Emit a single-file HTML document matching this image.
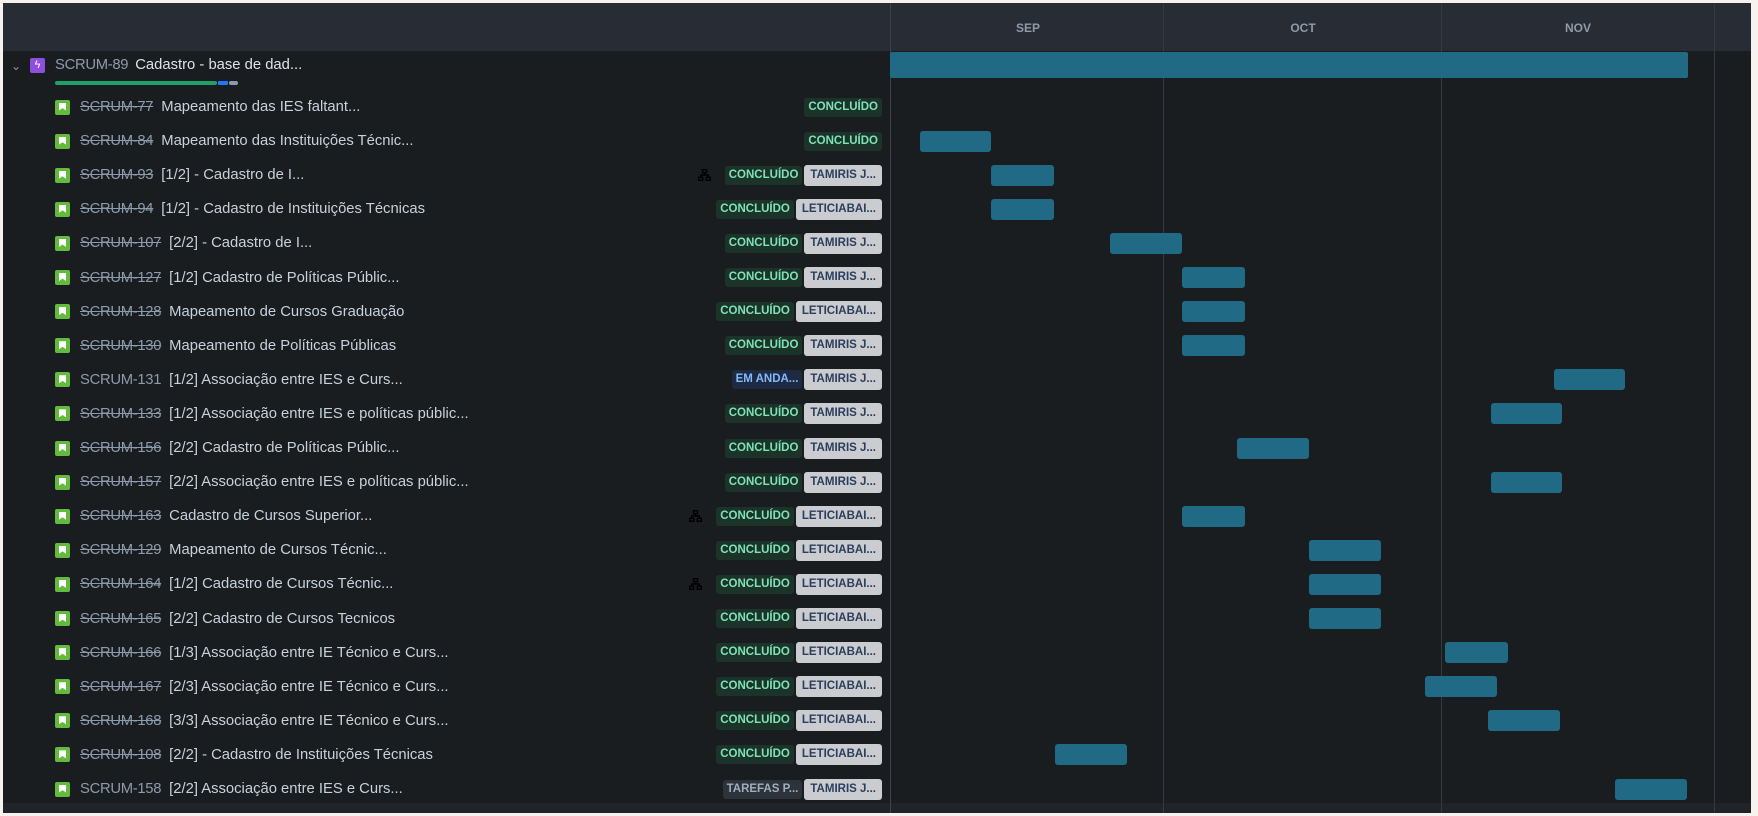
<!DOCTYPE html><html><head><meta charset="utf-8"><style>
*{margin:0;padding:0;box-sizing:border-box}
body{width:1758px;height:816px;background:#f8f2ef;position:relative;overflow:hidden;font-family:"Liberation Sans",Arial,sans-serif}
#f{position:absolute;left:3px;top:3px;width:1748px;height:810px;background:#1a1d20;overflow:hidden}
.hd{position:absolute;left:0;top:0;width:1748px;height:48px;background:#282c34}
.ft{position:absolute;left:0;top:800px;width:1748px;height:10px;background:#202428}
.vl{position:absolute;top:0;width:1px;height:810px;background:#343a42}
.m{position:absolute;top:18px;font-size:12px;font-weight:bold;color:#8f9aa7;width:100px;text-align:center}
.bar{position:absolute;height:21px;background:#216a85;border-radius:3px}
.row{position:absolute;left:52px;height:20px;display:flex;align-items:center;white-space:nowrap;font-size:14.8px}
.ic{width:15px;height:15px;background:#63ba3c;border-radius:2px;margin-right:10px;position:relative}
.ic:after{content:"";position:absolute;left:4px;top:3px;width:7px;height:8px;background:#fff;clip-path:polygon(0 0,100% 0,100% 100%,50% 70%,0 100%)}
.k{color:#8c9bab;margin-right:8px;letter-spacing:-0.3px}
.k.s{text-decoration:line-through}
.t{color:#c7d1db}
.lz{position:absolute;right:3px;display:flex;gap:2px;align-items:center;height:20px}
.l{font-size:11.5px;font-weight:bold;height:19px;line-height:19px;padding:0 4px;border-radius:3px;text-transform:uppercase}
.g{background:#1c3329;color:#7ee2b8}
.b{background:#1c2b41;color:#85b8ff}
.n{background:#2c333a;color:#9fadbc}
.a{background:#cacccf;color:#2c3e5d;height:21px;line-height:21px;border-radius:3px;padding:0 6px}
.hi{width:13px;height:12px;margin-right:12px}
</style></head><body><div id="f">
<div class="hd"></div>
<div class="ft"></div>
<div class="vl" style="left:887px;background:#3c434c"></div>
<div class="vl" style="left:1160px"></div>
<div class="vl" style="left:1438px"></div>
<div class="vl" style="left:1711px"></div>
<div class="m" style="left:975px">SEP</div>
<div class="m" style="left:1250px">OCT</div>
<div class="m" style="left:1525px">NOV</div>
<div class="bar" style="left:887px;top:49px;width:798px;height:26px;border-radius:2px"></div>
<div style="position:absolute;left:8px;top:56px;color:#8c9bab;font-size:12px">&#8964;</div>
<div style="position:absolute;left:27px;top:55px;width:15px;height:15px;background:#8f4ee0;border-radius:2px;color:#fff;font-size:11px;text-align:center;line-height:15px">ϟ</div>
<div style="position:absolute;left:52px;top:54px;font-size:14.8px;white-space:nowrap"><span style="color:#8c9bab;margin-right:7px;letter-spacing:-0.3px">SCRUM-89</span><span style="color:#dfe3e8">Cadastro - base de dad...</span></div>
<div style="position:absolute;left:52px;top:78px;width:162px;height:4px;background:#22a06b;border-radius:2px"></div>
<div style="position:absolute;left:215px;top:78px;width:10px;height:4px;background:#1d7afc;border-radius:1px"></div>
<div style="position:absolute;left:226px;top:78px;width:9px;height:4px;background:#8c9bab;border-radius:2px"></div>
<div id="rows"></div>
</div>
<script>
var R=[
["SCRUM-77","Mapeamento das IES faltant...",1,"g",null,0,null],
["SCRUM-84","Mapeamento das Instituições Técnic...",1,"g",null,0,[921,992]],
["SCRUM-93","[1/2] - Cadastro de I...",1,"g","T",1,[992,1055]],
["SCRUM-94","[1/2] - Cadastro de Instituições Técnicas",1,"g","L",0,[992,1055]],
["SCRUM-107","[2/2] - Cadastro de I...",1,"g","T",0,[1111,1183]],
["SCRUM-127","[1/2] Cadastro de Políticas Públic...",1,"g","T",0,[1183,1246]],
["SCRUM-128","Mapeamento de Cursos Graduação",1,"g","L",0,[1183,1246]],
["SCRUM-130","Mapeamento de Políticas Públicas",1,"g","T",0,[1183,1246]],
["SCRUM-131","[1/2] Associação entre IES e Curs...",0,"b","T",0,[1555,1626]],
["SCRUM-133","[1/2] Associação entre IES e políticas públic...",1,"g","T",0,[1492,1563]],
["SCRUM-156","[2/2] Cadastro de Políticas Públic...",1,"g","T",0,[1238,1310]],
["SCRUM-157","[2/2] Associação entre IES e políticas públic...",1,"g","T",0,[1492,1563]],
["SCRUM-163","Cadastro de Cursos Superior...",1,"g","L",1,[1183,1246]],
["SCRUM-129","Mapeamento de Cursos Técnic...",1,"g","L",0,[1310,1382]],
["SCRUM-164","[1/2] Cadastro de Cursos Técnic...",1,"g","L",1,[1310,1382]],
["SCRUM-165","[2/2] Cadastro de Cursos Tecnicos",1,"g","L",0,[1310,1382]],
["SCRUM-166","[1/3] Associação entre IE Técnico e Curs...",1,"g","L",0,[1446,1509]],
["SCRUM-167","[2/3] Associação entre IE Técnico e Curs...",1,"g","L",0,[1426,1498]],
["SCRUM-168","[3/3] Associação entre IE Técnico e Curs...",1,"g","L",0,[1489,1561]],
["SCRUM-108","[2/2] - Cadastro de Instituições Técnicas",1,"g","L",0,[1056,1128]],
["SCRUM-158","[2/2] Associação entre IES e Curs...",0,"n","T",0,[1616,1688]]];
var h="";
R.forEach(function(r,i){
var c=107+i*34.1-3;
var lab={g:"CONCLUÍDO",b:"EM ANDA...",n:"TAREFAS P..."}[r[3]];
var hi=r[5]?'<svg class="hi" viewBox="0 0 13 12"><g fill="none" stroke="#000" stroke-width="1.4"><rect x="4.5" y="0.7" width="4" height="3"/><rect x="0.7" y="8.3" width="4" height="3"/><rect x="8.3" y="8.3" width="4" height="3"/><path d="M6.5 3.7V6M2.7 8.3V6H10.3V8.3"/></g></svg>':'';
var a=r[4]?'<span class="a l">'+(r[4]=="T"?"TAMIRIS J...":"LETICIABAI...")+'</span>':'';
h+='<div class="row" style="top:'+(c-10)+'px;width:830px"><div class="ic"></div><span class="k'+(r[2]?' s':'')+'">'+r[0]+'</span><span class="t">'+r[1]+'</span><div class="lz">'+hi+'<span class="l '+r[3]+'">'+lab+'</span>'+a+'</div></div>';
if(r[6])h+='<div class="bar" style="left:'+(r[6][0]-4)+'px;top:'+(c-10.5)+'px;width:'+(r[6][1]-r[6][0])+'px"></div>';
});
document.getElementById("rows").innerHTML=h;
</script>
</body></html>
